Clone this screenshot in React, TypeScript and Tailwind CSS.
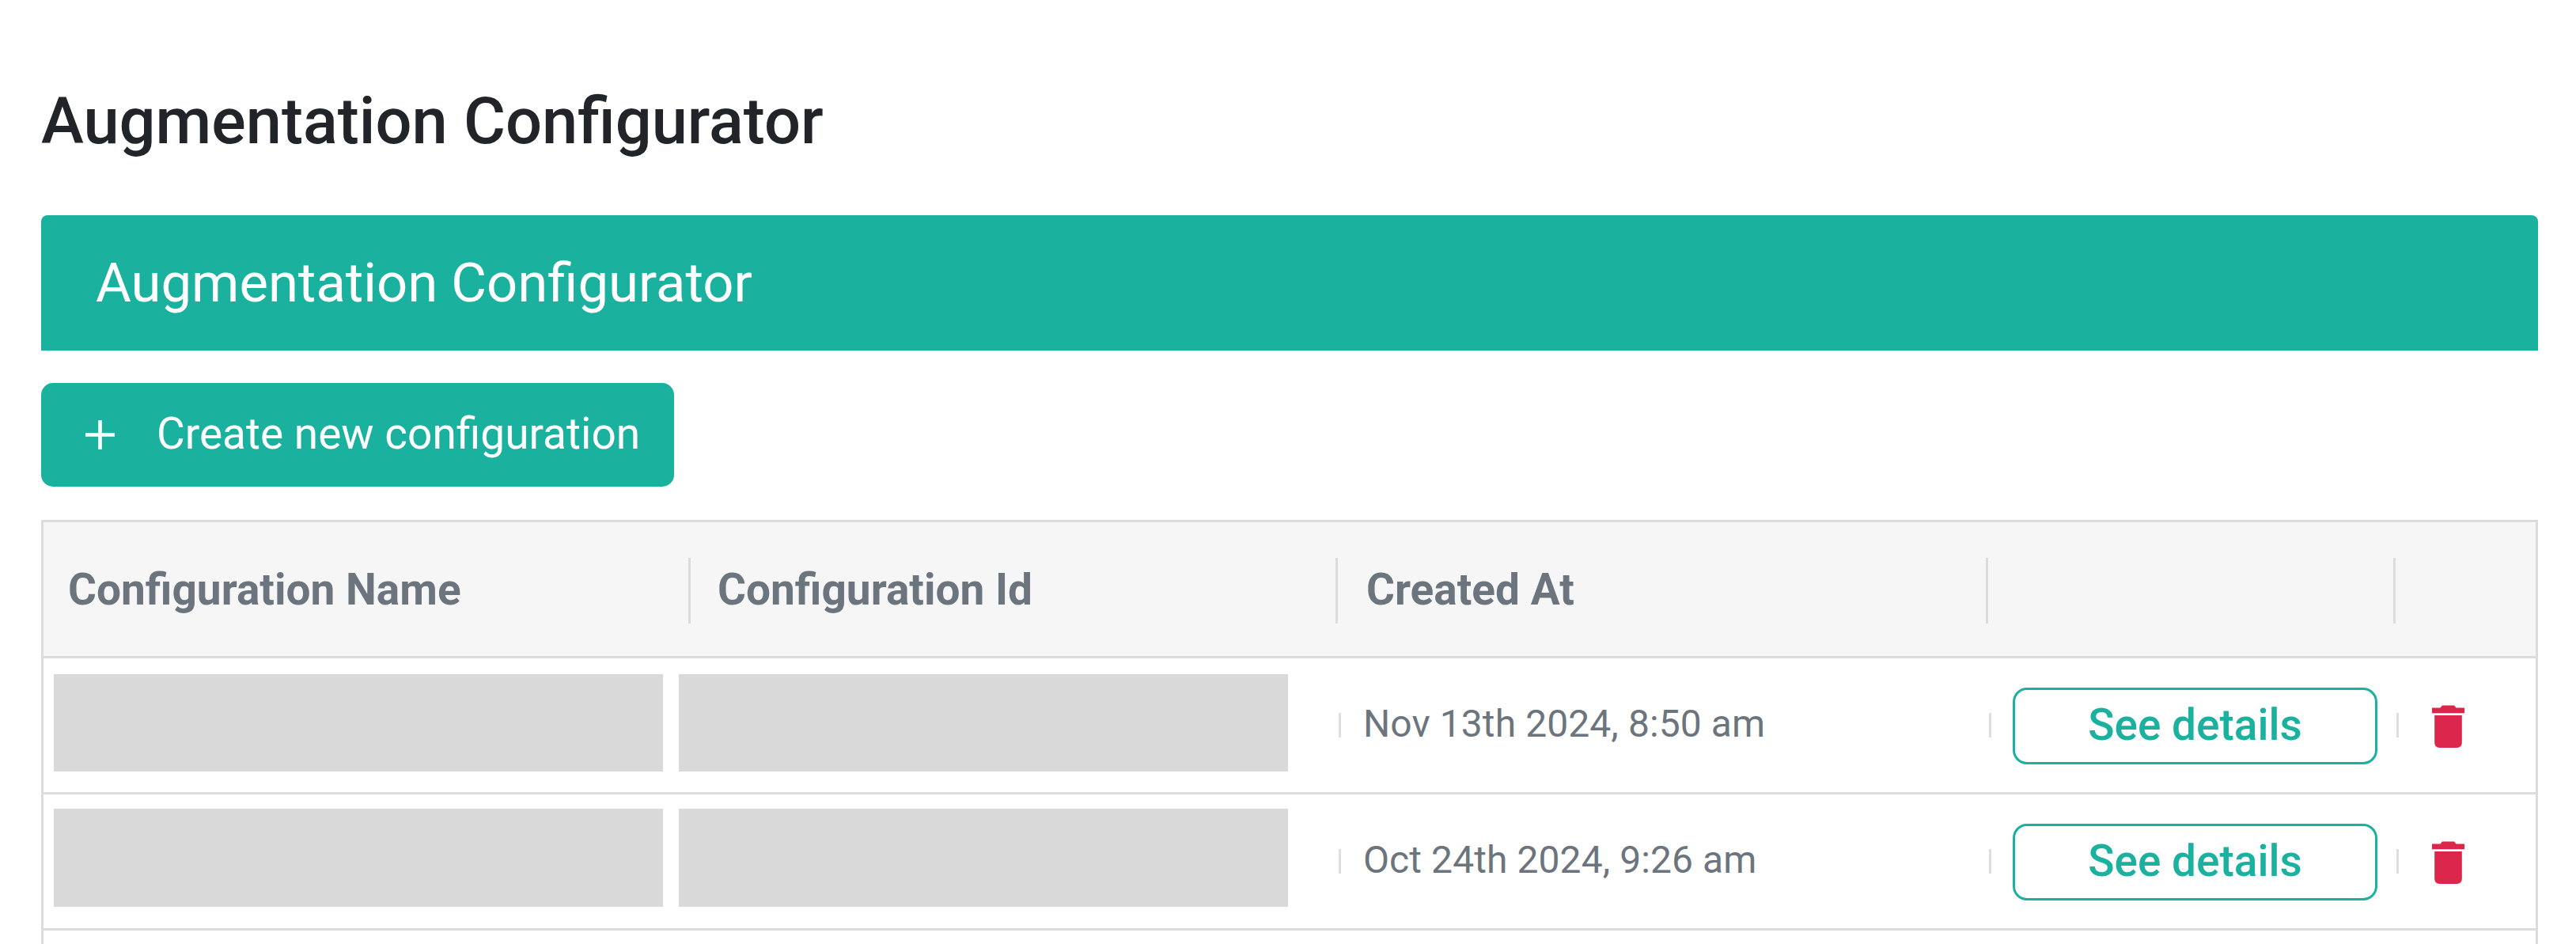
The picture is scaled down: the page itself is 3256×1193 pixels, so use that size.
import React from 'react';

interface Configuration {
  id: number;
  createdAt: string;
}

const configurations: Configuration[] = [
  { id: 1, createdAt: 'Nov 13th 2024, 8:50 am' },
  { id: 2, createdAt: 'Oct 24th 2024, 9:26 am' },
];

const PlusIcon = () => (
  <svg className="w-[37px] h-[37px] shrink-0" viewBox="0 0 37 37" fill="none" stroke="currentColor" strokeWidth="4.6">
    <path d="M18.5 0v37M0 18.5h37" />
  </svg>
);

const TrashIcon = () => (
  <svg className="w-[41px] h-[54px]" viewBox="0 0 41 54" fill="currentColor">
    <path d="M0 3.4h10.5L13 .4h15l2.5 3H41v6.8H0z" />
    <path d="M3.2 13h34.6v34.5q0 6.5-6.5 6.5H9.7q-6.5 0-6.5-6.5z" />
  </svg>
);

const HeaderDivider = () => <div className="w-[3px] h-[83px] mt-[3px] shrink-0 bg-[#dcdcdc]" />;

const CellDivider = () => <div className="w-[3px] h-[31px] shrink-0 bg-[#dedede]" />;

const TableHeader = () => (
  <div className="h-[172px] flex items-center bg-[#f6f6f6] border-b-[3px] border-[#dcdcdc] text-[55px] leading-[64px] font-bold text-[#6c757d]">
    <div className="w-[815px] pl-[31px] shrink-0">Configuration Name</div>
    <HeaderDivider />
    <div className="w-[815px] pl-[34px] shrink-0">Configuration Id</div>
    <HeaderDivider />
    <div className="w-[819px] pl-[36px] shrink-0">Created At</div>
    <HeaderDivider />
    <div className="w-[512px] shrink-0" />
    <HeaderDivider />
  </div>
);

const TableRow: React.FC<{ configuration: Configuration; tall: boolean }> = ({ configuration, tall }) => (
  <div className="h-[172px] flex items-center border-b-[3px] border-[#dcdcdc]">
    {/* Redacted name and id */}
    <div className={`w-[1637px] pl-[13px] flex gap-[20px] self-start shrink-0 ${tall ? 'pt-[18px]' : 'pt-[20px]'}`}>
      <div className={`w-[770px] bg-[#d9d9d9] ${tall ? 'h-[124px]' : 'h-[123px]'}`} />
      <div className={`w-[770px] bg-[#d9d9d9] ${tall ? 'h-[124px]' : 'h-[123px]'}`} />
    </div>
    <CellDivider />
    <div className="w-[819px] pl-[28px] pb-[3px] shrink-0 text-[48px] leading-[56px] tracking-[0.08px] text-[#6c757d]">
      {configuration.createdAt}
    </div>
    <CellDivider />
    <button className="w-[461px] h-[97px] ml-[27px] mr-[24px] mt-[2px] pb-[3px] shrink-0 rounded-[18px] border-[3px] border-[#1ab19f] text-[55px] leading-[64px] font-medium text-[#1ab19f]">
      See details
    </button>
    <CellDivider />
    <button className="ml-[42px] mt-[2px] text-[#da264a]">
      <TrashIcon />
    </button>
  </div>
);

export default function App() {
  return (
    <div className="w-[3256px] h-[1193px] overflow-hidden bg-white pl-[52px] pr-[48px] pt-[106px] font-['Roboto',sans-serif]">
      <h1 className="text-[81.2px] leading-[96px] font-medium text-[#212529]">Augmentation Configurator</h1>

      <div className="mt-[70px] h-[171px] flex items-center rounded-t-[8px] bg-[#1ab19f] pt-[1px] pl-[69px] text-[68.8px] leading-[80px] text-white">
        Augmentation Configurator
      </div>

      <button className="mt-[41px] w-[800px] h-[131px] flex items-center rounded-[15px] bg-[#1ab19f] pl-[56px] text-[55px] leading-[64px] text-white">
        <PlusIcon />
        <span className="ml-[53px] pb-[3px] whitespace-nowrap">Create new configuration</span>
      </button>

      <div className="mt-[42px] border-[3px] border-[#dcdcdc]">
        <TableHeader />
        {configurations.map((configuration, index) => (
          <TableRow key={configuration.id} configuration={configuration} tall={index > 0} />
        ))}
        <div className="h-[172px]" />
      </div>
    </div>
  );
}
